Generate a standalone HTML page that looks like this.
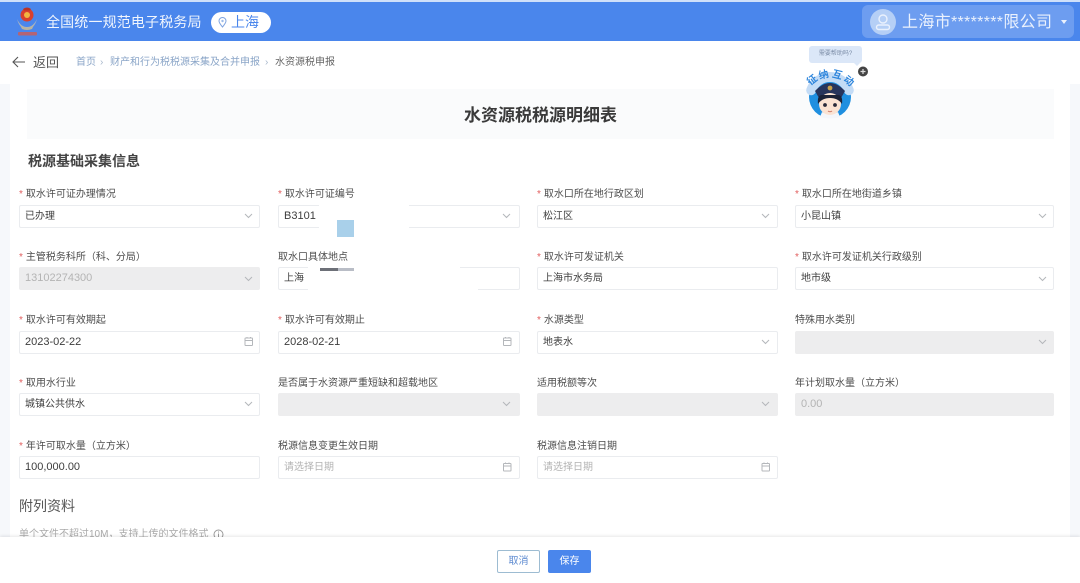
<!DOCTYPE html>
<html lang="zh">
<head>
<meta charset="utf-8">
<style>
html,body{margin:0;padding:0;width:1080px;height:583px;overflow:hidden;background:#fff}
body{font-family:"Liberation Sans","Noto Sans CJK SC",sans-serif;position:relative;color:#444}
div,span{position:absolute;white-space:nowrap;box-sizing:border-box}
svg{position:absolute;overflow:visible}
.lb{font-size:10px;line-height:14px;height:14px;color:#4d4d4d}
.lb b{font-weight:normal;color:#e26060;margin-right:3px;font-size:10px}
.in{height:23px;border:1px solid #eaecef;border-radius:2px;background:#fff;font-size:10px;line-height:21px;padding-left:5px;color:#3d3d3d}
.in.n{font-size:11px}
.in.d{background:#ededee;border-color:#ededee;color:#b4b4b4}
.in.p{color:#b3b3b3}
.mt{font-size:10px;line-height:10px;font-weight:bold;color:#2f86dc;width:10px;text-align:center}
</style>
</head>
<body>
<!-- side strips -->
<div style="left:0;top:84px;width:10px;height:455px;background:#f6f8fb"></div>
<div style="left:1070px;top:84px;width:10px;height:455px;background:#f6f8fb"></div>

<!-- header -->
<div style="left:0;top:0;width:1080px;height:41px;background:#4a86ec;border-top:2px solid #cfe0fa"></div>
<svg style="left:15px;top:6px" width="26" height="30" viewBox="0 0 26 30">
<path d="M2 14 C5 20 8 22 12 22 L12 24 C7 24 4 21 2 14Z M22 14 C19 20 16 22 12 22 L12 24 C17 24 20 21 22 14Z" fill="#aab4c0" transform="translate(0 -1)"/>
<path d="M5 19 Q12 24 19 19 L17 23 Q12 25 7 23Z" fill="#b9b3a0"/>
<circle cx="12" cy="9" r="6.500" fill="#d8402f"/>
<circle cx="12" cy="9" r="3" fill="#f1b541"/>
<path d="M8 3 Q12 0 16 3 L15 4.500 L9 4.500Z" fill="#b93227"/>
<rect x="3" y="26" width="19" height="3.500" rx="1" fill="#d8584c" opacity=".75"/>
</svg>
<div style="left:46px;top:13px;font-size:14px;line-height:19px;color:#fff;opacity:.92;letter-spacing:.15px">全国统一规范电子税务局</div>
<div style="left:211px;top:12px;width:60px;height:21px;border-radius:11px;background:#fff"></div>
<svg style="left:218px;top:17px" width="9" height="11" viewBox="0 0 9 11"><path d="M4.500 10 C2 7 1 5.500 1 4 A3.500 3.500 0 0 1 8 4 C8 5.500 7 7 4.500 10Z" fill="none" stroke="#7ea3e0" stroke-width="1"/><circle cx="4.500" cy="4" r="1.200" fill="#9dbbe8"/></svg>
<div style="left:231px;top:13px;font-size:14px;line-height:19px;color:#4a86ec">上海</div>

<div style="left:862px;top:5px;width:212px;height:33px;border-radius:6px;background:#6d9df0"></div>
<svg style="left:870px;top:9px" width="26" height="26" viewBox="0 0 26 26"><circle cx="13" cy="13" r="13" fill="#b5cff6"/><circle cx="13" cy="10" r="4" fill="none" stroke="#eaf1fd" stroke-width="1.400"/><rect x="6.500" y="16" width="13" height="4.500" rx="2.200" fill="none" stroke="#eaf1fd" stroke-width="1.400"/></svg>
<div style="left:902px;top:12px;font-size:16px;line-height:22px;color:#eaf1fd;letter-spacing:.32px">上海市********限公司</div>
<svg style="left:1061px;top:20px" width="6" height="4" viewBox="0 0 6 4"><path d="M0 0H6L3 4Z" fill="#eaf1fd"/></svg>

<!-- breadcrumb -->
<svg style="left:12px;top:56px" width="14" height="12" viewBox="0 0 14 12"><path d="M13 6H1M6 1L1 6L6 11" fill="none" stroke="#555" stroke-width="1.100"/></svg>
<div style="left:33px;top:54px;font-size:13px;line-height:18px;color:#555">返回</div>
<div style="left:76px;top:55px;font-size:10px;line-height:15px;color:#8ba6c8">首页</div>
<div style="left:100px;top:55px;font-size:10px;line-height:15px;color:#a8b8cc">›</div>
<div style="left:110px;top:55px;font-size:10px;line-height:15px;color:#8ba6c8">财产和行为税税源采集及合并申报</div>
<div style="left:265px;top:55px;font-size:10px;line-height:15px;color:#a8b8cc">›</div>
<div style="left:275px;top:55px;font-size:10px;line-height:15px;color:#666">水资源税申报</div>

<!-- title band -->
<div style="left:27px;top:89px;width:1027px;height:50px;background:#fafbfc"></div>
<div style="left:27px;top:103px;width:1027px;text-align:center;font-size:17px;line-height:25px;font-weight:bold;color:#3a3a3a">水资源税税源明细表</div>
<div style="left:28px;top:151px;font-size:14px;line-height:20px;font-weight:bold;color:#444">税源基础采集信息</div>

<!-- helper -->
<div style="left:809px;top:46px;width:53px;height:17px;border-radius:3px;background:#dbe7f8;font-size:6px;line-height:17px;text-align:center;color:#7d8ea8">需要帮助吗?</div>
<svg style="left:800px;top:60px" width="70" height="62" viewBox="0 0 70 62">
<path d="M54 3L60 3L57 6Z" fill="#dbe7f8"/>
<circle cx="63" cy="11.500" r="5" fill="#444"/><path d="M63 9V14M60.500 11.500H65.500" stroke="#ddd" stroke-width="1.200"/>
<circle cx="30" cy="37" r="21" fill="#1f8fe0"/>
<path d="M11.200 30.200 A20 20 0 0 1 48.800 30.200" fill="none" stroke="#c4dcf6" stroke-width="10" stroke-linecap="round"/>
<path d="M15 31 Q30 15 45 31 L41 38 L19 38Z" fill="#27345c"/>
<circle cx="30" cy="28" r="2.400" fill="#c9a04a"/>
<path d="M22 52 Q30 56 38 52 L40 57 Q30 60 20 57Z" fill="#f4f6fa"/>
<ellipse cx="30" cy="44" rx="11" ry="11" fill="#fbe3d3"/>
<path d="M18 44 Q17 35 22 35 H38 Q43 35 42 44 Q38 38 30 38 Q22 38 18 44Z" fill="#1c2238"/>
<circle cx="25" cy="45" r="1.900" fill="#2a2a3a"/><circle cx="35" cy="45" r="1.900" fill="#2a2a3a"/>
<path d="M28 51Q30 52.500 32 51" stroke="#c76" fill="none"/>
</svg>
<span class="mt" style="left:808px;top:76px;transform:rotate(-38deg)">征</span>
<span class="mt" style="left:819px;top:71px;transform:rotate(-14deg)">纳</span>
<span class="mt" style="left:832px;top:71px;transform:rotate(14deg)">互</span>
<span class="mt" style="left:843px;top:77px;transform:rotate(38deg)">动</span>

<!-- row 1 -->
<div class="lb" style="left:19px;top:188px"><b>*</b>取水许可证办理情况</div>
<div class="lb" style="left:278px;top:188px"><b>*</b>取水许可证编号</div>
<div class="lb" style="left:537px;top:188px"><b>*</b>取水口所在地行政区划</div>
<div class="lb" style="left:795px;top:188px"><b>*</b>取水口所在地街道乡镇</div>
<div class="in" style="left:19px;top:205px;width:241px">已办理</div>
<div class="in n" style="left:278px;top:205px;width:242px">B3101</div>
<div class="in" style="left:537px;top:205px;width:241px">松江区</div>
<div class="in" style="left:795px;top:205px;width:259px">小昆山镇</div>
<!-- row 2 -->
<div class="lb" style="left:19px;top:251px"><b>*</b>主管税务科所（科、分局）</div>
<div class="lb" style="left:278px;top:251px">取水口具体地点</div>
<div class="lb" style="left:537px;top:251px"><b>*</b>取水许可发证机关</div>
<div class="lb" style="left:795px;top:251px"><b>*</b>取水许可发证机关行政级别</div>
<div class="in d n" style="left:19px;top:267px;width:241px">13102274300</div>
<div class="in" style="left:278px;top:267px;width:242px">上海</div>
<div class="in" style="left:537px;top:267px;width:241px">上海市水务局</div>
<div class="in" style="left:795px;top:267px;width:259px">地市级</div>
<!-- row 3 -->
<div class="lb" style="left:19px;top:314px"><b>*</b>取水许可有效期起</div>
<div class="lb" style="left:278px;top:314px"><b>*</b>取水许可有效期止</div>
<div class="lb" style="left:537px;top:314px"><b>*</b>水源类型</div>
<div class="lb" style="left:795px;top:314px">特殊用水类别</div>
<div class="in n" style="left:19px;top:331px;width:241px">2023-02-22</div>
<div class="in n" style="left:278px;top:331px;width:242px">2028-02-21</div>
<div class="in" style="left:537px;top:331px;width:241px">地表水</div>
<div class="in d" style="left:795px;top:331px;width:259px"></div>
<!-- row 4 -->
<div class="lb" style="left:19px;top:377px"><b>*</b>取用水行业</div>
<div class="lb" style="left:278px;top:377px">是否属于水资源严重短缺和超载地区</div>
<div class="lb" style="left:537px;top:377px">适用税额等次</div>
<div class="lb" style="left:795px;top:377px">年计划取水量（立方米）</div>
<div class="in" style="left:19px;top:393px;width:241px">城镇公共供水</div>
<div class="in d" style="left:278px;top:393px;width:242px"></div>
<div class="in d" style="left:537px;top:393px;width:241px"></div>
<div class="in d n" style="left:795px;top:393px;width:259px">0.00</div>
<!-- row 5 -->
<div class="lb" style="left:19px;top:440px"><b>*</b>年许可取水量（立方米）</div>
<div class="lb" style="left:278px;top:440px">税源信息变更生效日期</div>
<div class="lb" style="left:537px;top:440px">税源信息注销日期</div>
<div class="in n" style="left:19px;top:456px;width:241px">100,000.00</div>
<div class="in p" style="left:278px;top:456px;width:242px">请选择日期</div>
<div class="in p" style="left:537px;top:456px;width:241px">请选择日期</div>

<!-- chevrons -->
<svg width="1080" height="583" style="left:0;top:0" fill="none" stroke="#b4b7bb" stroke-width="1">
<path d="M245 214l3.500 3.500 3.500-3.500M503 214l3.500 3.500 3.500-3.500M762 214l3.500 3.500 3.500-3.500M1039 214l3.500 3.500 3.500-3.500"/>
<path d="M245 277l3.500 3.500 3.500-3.500M1039 277l3.500 3.500 3.500-3.500"/>
<path d="M762 340l3.500 3.500 3.500-3.500M1039 340l3.500 3.500 3.500-3.500"/>
<path d="M245 402l3.500 3.500 3.500-3.500M503 402l3.500 3.500 3.500-3.500M762 402l3.500 3.500 3.500-3.500"/>
<g stroke="#b4b7bb">
<rect x="245" y="338" width="7.500" height="7.500" rx=".6"/><path d="M245 340.500h7.500M247 337v1.500M250.500 337v1.500"/>
<rect x="503.500" y="338" width="7.500" height="7.500" rx=".6"/><path d="M503.500 340.500h7.500M505.500 337v1.500M509 337v1.500"/>
<rect x="503.500" y="463.500" width="7.500" height="7.500" rx=".6"/><path d="M503.500 466h7.500M505.500 462.500v1.500M509 462.500v1.500"/>
<rect x="762" y="463.500" width="7.500" height="7.500" rx=".6"/><path d="M762 466h7.500M764 462.500v1.500M767.500 462.500v1.500"/>
</g>
</svg>

<!-- redactions -->
<div style="left:319px;top:204px;width:90px;height:26px;background:#fff"></div>
<div style="left:337px;top:220px;width:17px;height:17px;background:#a9d0ea"></div>
<div style="left:308px;top:266px;width:152px;height:14px;background:#fff"></div>
<div style="left:308px;top:280px;width:170px;height:12px;background:#fff"></div>
<div style="left:320px;top:268px;width:34px;height:3px;background:#b9bdc6"></div>
<div style="left:320px;top:268px;width:18px;height:3px;background:#6d7078"></div>

<!-- attachments -->
<div style="left:19px;top:496px;font-size:14px;line-height:20px;color:#555">附列资料</div>
<div style="left:19px;top:527px;font-size:10px;line-height:15px;color:#aaa">单个文件不超过10M，支持上传的文件格式</div>
<svg style="left:213px;top:529px" width="11" height="11" viewBox="0 0 11 11"><circle cx="5.500" cy="5.500" r="4.500" fill="none" stroke="#999"/><path d="M5.500 4.500v3.500M5.500 2.500v1" stroke="#999"/></svg>

<!-- footer -->
<div style="left:0;top:537px;width:1080px;height:46px;background:#fff;box-shadow:0 -1px 3px rgba(0,0,0,.1)"></div>
<div style="left:497px;top:550px;width:43px;height:23px;border:1px solid #9dbcd2;border-radius:2px;background:#fff;font-size:10px;line-height:21px;text-align:center;color:#5c8ad0">取消</div>
<div style="left:548px;top:550px;width:43px;height:23px;border-radius:2px;background:#4a86ec;font-size:10px;line-height:23px;text-align:center;color:#fff">保存</div>
</body>
</html>
